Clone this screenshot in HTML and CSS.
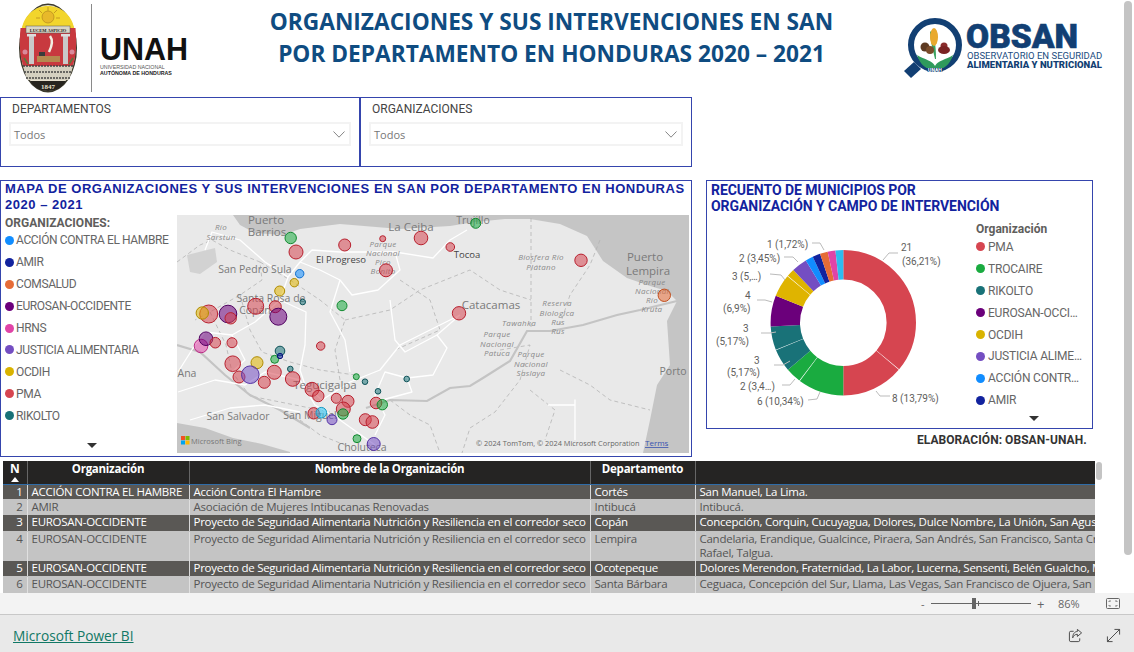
FILE: index.html
```html
<!DOCTYPE html>
<html lang="es">
<head>
<meta charset="utf-8">
<title>Organizaciones y sus intervenciones en SAN</title>
<link rel="stylesheet" href="styles.css">
</head>
<body>
<div class="report">
  <header class="header">
    <svg class="logo-unah" viewBox="0 0 200 97" aria-label="UNAH">
      <ellipse cx="48" cy="48" rx="29" ry="44.5" fill="#3c3a2c"/>
      <ellipse cx="48" cy="48" rx="27.5" ry="43" fill="#e8e2d0"/>
      <path d="M21.5 30 C24 14 36 6 48 6 C60 6 72 14 74.500 30 Z" fill="#f2d52c"/>
      <circle cx="48" cy="17" r="6" fill="#e8b92a" stroke="#b98f20" stroke-width=".8"/>
      <path d="M48 7v4M39 10l3 3M57 10l-3 3M36 18h4M56 18h4" stroke="#c79a20" stroke-width="1"/>
      <path d="M20.500 28 H75.500 C77 45 76 58 72 68 H24 C20 58 19 45 20.500 28Z" fill="#c8393f"/>
      <rect x="26" y="26" width="44" height="7" fill="#d9d5c5" stroke="#555" stroke-width=".5"/>
      <text x="48" y="32" class="seal-motto">LUCEM ASPICIO</text>
      <rect x="29" y="36" width="5" height="28" fill="#c9c9c9"/>
      <rect x="63" y="36" width="5" height="28" fill="#c9c9c9"/>
      <rect x="27" y="34" width="9" height="2.500" fill="#ddd"/>
      <rect x="61" y="34" width="9" height="2.500" fill="#ddd"/>
      <path d="M50 36 C53 40 52 46 49 52" stroke="#f2efe2" stroke-width="2.500" fill="none"/>
      <rect x="37" y="56" width="23" height="6" fill="#b5894f"/>
      <rect x="39" y="52" width="6" height="4" fill="#3b3b3b"/>
      <circle cx="25" cy="52" r="2.500" fill="#d98a9b"/>
      <circle cx="72" cy="52" r="2.500" fill="#d98a9b"/>
      <path d="M24 58l4 6M73 58l-4 6" stroke="#567a3c" stroke-width="1.500"/>
      <path d="M23 66 H73 L69 80 H27 Z" fill="#d4d0c0"/>
      <path d="M23 66H73M24 72H72M26 78H70" stroke="#444" stroke-width="1.500" stroke-dasharray="2 1"/>
      <path d="M30 81 H66 C62 88 55 91 48 91 C41 91 34 88 30 81Z" fill="#27251f"/>
      <text x="48" y="89" class="seal-year">1847</text>
      <rect x="91" y="4" width="1" height="88" fill="#8a8a8a"/>
      <text x="100" y="60" class="unah-big">UNAH</text>
      <text x="100" y="69" class="unah-small">UNIVERSIDAD NACIONAL</text>
      <text x="100" y="75" class="unah-small unah-strong">AUTÓNOMA DE HONDURAS</text>
    </svg>
    <h1 class="title">ORGANIZACIONES Y SUS INTERVENCIONES EN SAN<br>POR DEPARTAMENTO EN HONDURAS 2020 – 2021</h1>
    <svg class="logo-obsan" viewBox="900 0 210 97" aria-label="OBSAN">
      <path d="M914 62 L921 69 L911 78 L904 71 Z" fill="#123f73"/>
      <circle cx="935" cy="45" r="24" fill="#fff" stroke="#123f73" stroke-width="6"/>
      <path d="M917 55 C925 60 932 60 935 66 C938 60 946 60 953 55 C950 65 943 70 935 70 C927 70 920 65 917 55Z" fill="#2f9a5c"/>
      <path d="M935 59 C933 50 930 40 930 31 C934 34 936 44 936 59Z" fill="#3aa35f"/>
      <ellipse cx="934" cy="37" rx="4" ry="9" fill="#e9a92e"/>
      <circle cx="925" cy="47" r="4.500" fill="#5d3a22"/>
      <circle cx="930" cy="50" r="4" fill="#7a4c2a"/>
      <circle cx="944" cy="46" r="3.500" fill="#8a2c2c"/>
      <ellipse cx="944" cy="50" rx="6" ry="4" fill="#7a2323"/>
      <path d="M925 68 H945 L942 72 H928Z" fill="#123f73"/>
      <text x="935" y="71.500" class="obsan-mini">UNAH</text>
      <text x="966" y="48" class="obsan-big">OBSAN</text>
      <text x="967" y="59" class="obsan-line">OBSERVATORIO EN SEGURIDAD</text>
      <text x="967" y="68" class="obsan-line obsan-strong">ALIMENTARIA Y NUTRICIONAL</text>
    </svg>
  </header>

  <section class="slicers">
    <div class="slicer slicer-a">
      <div class="slicer-label">DEPARTAMENTOS</div>
      <div class="slicer-box"><span>Todos</span>
        <svg class="chev" viewBox="0 0 12 7"><path d="M.5.5 6 6.200 11.500.5" fill="none" stroke="#777" stroke-width=".9"/></svg>
      </div>
    </div>
    <div class="slicer slicer-b">
      <div class="slicer-label">ORGANIZACIONES</div>
      <div class="slicer-box"><span>Todos</span>
        <svg class="chev" viewBox="0 0 12 7"><path d="M.5.5 6 6.200 11.500.5" fill="none" stroke="#777" stroke-width=".9"/></svg>
      </div>
    </div>
  </section>

  <main class="visuals">
    <section class="map-card">
      <h2 class="map-title">MAPA DE ORGANIZACIONES Y SUS INTERVENCIONES EN SAN POR DEPARTAMENTO EN HONDURAS<br>2020 – 2021</h2>
      <div class="map-body">
        <div class="map-legend">
          <div class="legend-head">ORGANIZACIONES:</div>
          <ul class="legend-list">
            <li><i class="dot c-accion"></i>ACCIÓN CONTRA EL HAMBRE</li>
            <li><i class="dot c-amir"></i>AMIR</li>
            <li><i class="dot c-comsalud"></i>COMSALUD</li>
            <li><i class="dot c-eurosan"></i>EUROSAN-OCCIDENTE</li>
            <li><i class="dot c-hrns"></i>HRNS</li>
            <li><i class="dot c-justicia"></i>JUSTICIA ALIMENTARIA</li>
            <li><i class="dot c-ocdih"></i>OCDIH</li>
            <li><i class="dot c-pma"></i>PMA</li>
            <li><i class="dot c-rikolto"></i>RIKOLTO</li>
          </ul>
          <div class="more-arrow"></div>
        </div>
        <svg class="map" viewBox="177 215 512 238">
          <rect x="177" y="215" width="512" height="238" fill="#e9e9e9"/>
          <path class="sea" d="M233 215 L240 225 L255 233 L283 235 L300 229 L340 224 L400 229 L450 226 L475 222 L505 219 L530 219 L560 224 L587 236 L603 261 L627 278 L650 286 L667 291 L677 301 L667 321 L670 365 L657 385 L650 420 L643 453 L689 453 L689 215 Z"/>
          <path class="sea" d="M177 423 L205 428 L233 438 L262 444 L290 452 L290 453 L177 453 Z"/>
          <path class="lake" d="M187 255 L215 248 L217 262 L200 274 L190 272Z"/>
          <g class="dept">
            <path d="M177 262 L200 245 L212 240 L230 250 L260 262 L262 280 L240 295 L210 312 L195 320"/>
            <path d="M260 262 L290 280 L320 300 L345 320 L335 350 L340 380"/>
            <path d="M240 295 L250 330 L262 352 L290 362 L320 370 L355 375"/>
            <path d="M210 312 L226 345 L232 372 L250 396 L290 404 L330 412"/>
            <path d="M345 320 L390 310 L420 290 L470 270 L500 290 L531 300"/>
            <path d="M531 218 L531 332"/>
            <path d="M500 350 L530 345 L520 380 L495 412 L470 428 L462 453"/>
            <path d="M560 370 L590 385 L610 400 L650 410"/>
            <path d="M600 240 L590 265 L570 295 L560 325"/>
            <path d="M390 400 L410 415 L430 425 L440 453"/>
            <path d="M400 280 L430 300 L440 330 L395 350"/>
            <path d="M300 420 L320 435 L345 445"/>
            <path d="M530 390 L555 410 L545 440"/>
          </g>
          <path class="border" d="M177 345 L200 352 L225 375 L250 395 L280 410 L310 428 M366 408 L390 400 L427 401 L450 388 L470 386 L483 378 L510 361 L527 331 L550 331 L583 325 L617 315 L640 310 L677 301"/>
          <g class="road">
            <path d="M205 250 L212 232 L240 240 L265 262 L288 277 L300 262 L312 250 L340 252 L395 252 L433 258 L450 240 L467 230"/>
            <path d="M288 277 L280 300 L255 322 L232 335 L205 332 L195 345 L178 372"/>
            <path d="M300 262 L320 270 L340 280 L352 295 L378 290 L400 270 L395 252"/>
            <path d="M280 300 L306 312 L305 345 L300 370 L305 385 L322 400 L350 382 L380 370 L400 345 L460 315"/>
            <path d="M340 280 L330 312 L345 340 L350 372"/>
            <path d="M178 392 L215 380 L245 385 L265 372 L300 380 L315 405 L340 420 L375 445"/>
            <path d="M460 315 L437 335 L447 348 L433 375 L407 378 L385 372 L375 395 L385 415 L375 435"/>
            <path d="M190 420 L230 408 L265 405 L300 412"/>
            <path d="M407 378 L412 392 L382 400"/>
            <path d="M390 300 L395 340 L405 352 L437 335"/>
            <path d="M548 405 L575 405 L575 400 L575 440"/>
            <path d="M232 335 L245 360 L232 372"/>
          </g>
          <g class="lbl">
            <text class="city" x="266" y="224">Puerto</text>
            <text class="city" x="267" y="236">Barrios</text>
            <text class="tiny it" x="221" y="230">Río</text>
            <text class="tiny it" x="221" y="240">Sarstun</text>
            <text x="255" y="273">San Pedro Sula</text>
            <text class="dark small" x="341" y="263">El Progreso</text>
            <text x="271" y="302">Santa Rosa de</text>
            <text x="255" y="314">Copán</text>
            <text x="187" y="377">Ana</text>
            <text class="city" x="325" y="389">Tegucigalpa</text>
            <text x="238" y="420">San Salvador</text>
            <text x="310" y="419">San Miguel</text>
            <text x="362" y="451">Choluteca</text>
            <text class="city" x="411" y="231">La Ceiba</text>
            <text x="473" y="224">Trujillo</text>
            <text class="tiny it" x="383" y="247">Parque</text>
            <text class="tiny it" x="383" y="256">Nacional</text>
            <text class="tiny it" x="383" y="265">Pico</text>
            <text class="tiny it" x="383" y="274">Bonito</text>
            <text class="dark small" x="467" y="258">Tocoa</text>
            <text class="tiny it" x="541" y="260">Biosfera Río</text>
            <text class="tiny it" x="541" y="270">Plátano</text>
            <text class="city" x="645" y="261">Puerto</text>
            <text class="city" x="648" y="275">Lempira</text>
            <text class="tiny it" x="652" y="285">Parque</text>
            <text class="tiny it" x="652" y="294">Nacional</text>
            <text class="tiny it" x="652" y="303">Río</text>
            <text class="tiny it" x="652" y="312">Kruta</text>
            <text class="city" x="491" y="309">Catacamas</text>
            <text class="tiny it" x="557" y="306">Reserva</text>
            <text class="tiny it" x="557" y="316">Biologica</text>
            <text class="tiny it" x="558" y="325">Rus</text>
            <text class="tiny it" x="558" y="334">Rus</text>
            <text class="tiny it" x="519" y="326">Tawahka</text>
            <text class="tiny it" x="497" y="337">Parque</text>
            <text class="tiny it" x="497" y="347">Nacional</text>
            <text class="tiny it" x="497" y="356">Patuca</text>
            <text class="tiny it" x="531" y="357">Parque</text>
            <text class="tiny it" x="531" y="367">Nacional</text>
            <text class="tiny it" x="531" y="376">Saslaya</text>
            <text x="673" y="375">Porto</text>
          </g>
          <g class="pins">
            <circle class="p-trocaire" cx="290.700" cy="238" r="5.700"/>
            <circle class="p-pma" cx="296" cy="252" r="7"/>
            <circle class="p-pma" cx="344.700" cy="245" r="6"/>
            <circle class="p-accion" cx="299.700" cy="273.700" r="4.200"/>
            <circle class="p-ocdih" cx="294.300" cy="282.700" r="4.200"/>
            <circle class="p-ocdih" cx="279.700" cy="291" r="5"/>
            <circle class="p-rikolto" cx="302.700" cy="302" r="2.800"/>
            <circle class="p-trocaire" cx="342" cy="305.700" r="5"/>
            <circle class="p-pma" cx="255.700" cy="306.300" r="8"/>
            <circle class="p-pma" cx="275.300" cy="306.700" r="6"/>
            <circle class="p-eurosan" cx="278.300" cy="316.700" r="8.500"/>
            <circle class="p-pma" cx="208.700" cy="314" r="9"/>
            <circle class="p-ocdih" cx="202.300" cy="313" r="6.200"/>
            <circle class="p-eurosan" cx="228" cy="314" r="8.800"/>
            <circle class="p-pma" cx="230.700" cy="318.300" r="5.700"/>
            <circle class="p-hrns" cx="201" cy="346" r="6.800"/>
            <circle class="p-eurosan" cx="206" cy="338.700" r="6.800"/>
            <circle class="p-pma" cx="215.300" cy="342.700" r="5.300"/>
            <circle class="p-pma" cx="232" cy="342.700" r="5"/>
            <circle class="p-pma" cx="320.700" cy="346" r="4.200"/>
            <circle class="p-rikolto" cx="280" cy="351" r="4.800"/>
            <circle class="p-trocaire" cx="274.700" cy="359.300" r="4"/>
            <circle class="p-amir" cx="280" cy="356" r="2.700"/>
            <circle class="p-ocdih" cx="257" cy="362.700" r="6"/>
            <circle class="p-pma" cx="232.700" cy="363.700" r="7.800"/>
            <circle class="p-pma" cx="239" cy="377" r="6"/>
            <circle class="p-justicia" cx="250.300" cy="374.700" r="8.800"/>
            <circle class="p-pma" cx="274.300" cy="372.300" r="7"/>
            <circle class="p-rikolto" cx="290.300" cy="369" r="2.800"/>
            <circle class="p-pma" cx="264.300" cy="382.300" r="6"/>
            <circle class="p-pma" cx="292.700" cy="379" r="7.300"/>
            <circle class="p-pma" cx="312" cy="389.300" r="7"/>
            <circle class="p-pma" cx="318.300" cy="396" r="5.700"/>
            <circle class="p-pma" cx="336.300" cy="398.300" r="5"/>
            <circle class="p-pma" cx="348" cy="401.300" r="6"/>
            <circle class="p-pma" cx="343.300" cy="409" r="7"/>
            <circle class="p-trocaire" cx="343" cy="414" r="5.200"/>
            <circle class="p-pma" cx="313.700" cy="413.300" r="5.700"/>
            <circle class="p-cyan" cx="321.300" cy="412.700" r="5.300"/>
            <circle class="p-justicia" cx="332" cy="419.700" r="5"/>
            <circle class="p-trocaire" cx="475.700" cy="223.300" r="5"/>
            <circle class="p-pma" cx="421" cy="238" r="6.800"/>
            <circle class="p-pma" cx="382.700" cy="238.700" r="3"/>
            <circle class="p-pma" cx="450.300" cy="247" r="4.300"/>
            <circle class="p-pma" cx="386" cy="270.300" r="6.500"/>
            <circle class="p-pma" cx="581" cy="260.300" r="6.200"/>
            <circle class="p-pma" cx="459" cy="313.300" r="6.700"/>
            <circle class="p-comsalud" cx="664.300" cy="295.300" r="6.200"/>
            <circle class="p-trocaire" cx="356.300" cy="376.700" r="3"/>
            <circle class="p-rikolto" cx="365" cy="381.700" r="2.800"/>
            <circle class="p-rikolto" cx="406.700" cy="379" r="2.800"/>
            <circle class="p-rikolto" cx="378" cy="391.300" r="2.800"/>
            <circle class="p-pma" cx="376" cy="403" r="5.800"/>
            <circle class="p-trocaire" cx="382.300" cy="404.700" r="5.200"/>
            <circle class="p-pma" cx="365.300" cy="419.700" r="6"/>
            <circle class="p-pma" cx="372.300" cy="422" r="6.300"/>
            <circle class="p-trocaire" cx="357" cy="438.700" r="4"/>
            <circle class="p-justicia" cx="373.700" cy="444" r="6.500"/>
          </g>
          <g>
            <rect x="181" y="436" width="4" height="4" fill="#f25022"/>
            <rect x="185.500" y="436" width="4" height="4" fill="#7fba00"/>
            <rect x="181" y="440.500" width="4" height="4" fill="#00a4ef"/>
            <rect x="185.500" y="440.500" width="4" height="4" fill="#ffb900"/>
            <text class="bing" x="191" y="444">Microsoft Bing</text>
            <text class="attr" x="476" y="446">© 2024 TomTom, © 2024 Microsoft Corporation</text>
            <text class="terms" x="645" y="446">Terms</text>
          </g>
        </svg>
      </div>
    </section>

    <div class="right-col">
      <section class="donut-card">
        <h2 class="donut-title">RECUENTO DE MUNICIPIOS POR<br>ORGANIZACIÓN Y CAMPO DE INTERVENCIÓN</h2>
        <div class="donut-body">
          <svg class="donut" viewBox="706 216 264 212">
            <g class="ring" transform="rotate(-90 843.300 323.700)">
              <circle class="s-pma" pathLength="100" cx="843.300" cy="323.700" r="58" stroke-dasharray="36.060 100" stroke-dashoffset="0"/>
              <circle class="s-pma" pathLength="100" cx="843.300" cy="323.700" r="58" stroke-dasharray="13.790 100" stroke-dashoffset="-36.210"/>
              <circle class="s-trocaire" pathLength="100" cx="843.300" cy="323.700" r="58" stroke-dasharray="10.190 100" stroke-dashoffset="-50"/>
              <circle class="s-trocaire" pathLength="100" cx="843.300" cy="323.700" r="58" stroke-dasharray="3.450 100" stroke-dashoffset="-60.340"/>
              <circle class="s-rikolto" pathLength="100" cx="843.300" cy="323.700" r="58" stroke-dasharray="5.020 100" stroke-dashoffset="-63.790"/>
              <circle class="s-rikolto" pathLength="100" cx="843.300" cy="323.700" r="58" stroke-dasharray="5.170 100" stroke-dashoffset="-68.960"/>
              <circle class="s-eurosan" pathLength="100" cx="843.300" cy="323.700" r="58" stroke-dasharray="6.900 100" stroke-dashoffset="-74.130"/>
              <circle class="s-ocdih" pathLength="100" cx="843.300" cy="323.700" r="58" stroke-dasharray="5.020 100" stroke-dashoffset="-81.030"/>
              <circle class="s-ocdih" pathLength="100" cx="843.300" cy="323.700" r="58" stroke-dasharray="1.720 100" stroke-dashoffset="-86.200"/>
              <circle class="s-justicia" pathLength="100" cx="843.300" cy="323.700" r="58" stroke-dasharray="3.450 100" stroke-dashoffset="-87.920"/>
              <circle class="s-accion" pathLength="100" cx="843.300" cy="323.700" r="58" stroke-dasharray="1.720 100" stroke-dashoffset="-91.370"/>
              <circle class="s-amir" pathLength="100" cx="843.300" cy="323.700" r="58" stroke-dasharray="1.720 100" stroke-dashoffset="-93.090"/>
              <circle class="s-comsalud" pathLength="100" cx="843.300" cy="323.700" r="58" stroke-dasharray="1.720 100" stroke-dashoffset="-94.810"/>
              <circle class="s-hrns" pathLength="100" cx="843.300" cy="323.700" r="58" stroke-dasharray="1.720 100" stroke-dashoffset="-96.530"/>
              <circle class="s-cyan" pathLength="100" cx="843.300" cy="323.700" r="58" stroke-dasharray="1.750 100" stroke-dashoffset="-98.250"/>
            </g>
            <g class="leaders">
              <path d="M883 261 L889 254 L898 254"/>
              <path d="M876 392 L880 397 L890 397"/>
              <path d="M820 393 L817 400 L808 401"/>
              <path d="M795 380 L790 386 L782 386"/>
              <path d="M790 362 L783 366 L774 366"/>
              <path d="M776 333 L770 334 L761 334"/>
              <path d="M772 303 L765 301 L757 301"/>
              <path d="M785 281 L781 276 L770 275"/>
              <path d="M798 263 L793 258 L784 258"/>
              <path d="M824 251 L820 244 L812 244"/>
            </g>
            <g class="d-lbl">
              <text x="901" y="252">21</text>
              <text x="902" y="266">(36,21%)</text>
              <text x="892" y="403">8 (13,79%)</text>
              <text x="757" y="406">6 (10,34%)</text>
              <text x="740" y="391">2 (3,4…)</text>
              <text x="754" y="365">3</text>
              <text x="727" y="377">(5,17%)</text>
              <text x="743" y="333">3</text>
              <text x="716" y="346">(5,17%)</text>
              <text x="745" y="300">4</text>
              <text x="723" y="313">(6,9%)</text>
              <text x="732" y="281">3 (5,…)</text>
              <text x="739" y="263">2 (3,45%)</text>
              <text x="767" y="249">1 (1,72%)</text>
            </g>
          </svg>
          <div class="donut-legend">
            <div class="dl-head">Organización</div>
            <ul class="dl-list">
              <li><i class="dot c-pma"></i>PMA</li>
              <li><i class="dot c-trocaire"></i>TROCAIRE</li>
              <li><i class="dot c-rikolto"></i>RIKOLTO</li>
              <li><i class="dot c-eurosan"></i>EUROSAN-OCCI…</li>
              <li><i class="dot c-ocdih"></i>OCDIH</li>
              <li><i class="dot c-justicia"></i>JUSTICIA ALIME…</li>
              <li><i class="dot c-accion"></i>ACCIÓN CONTR…</li>
              <li><i class="dot c-amir"></i>AMIR</li>
            </ul>
            <div class="more-arrow more-arrow-d"></div>
          </div>
        </div>
      </section>
      <p class="credit">ELABORACIÓN: OBSAN-UNAH.</p>
    </div>
  </main>

  <div class="table-area">
    <div class="table-wrap">
      <table class="grid">
        <colgroup><col class="w-n"><col class="w-org"><col class="w-name"><col class="w-dep"><col class="w-mun"></colgroup>
        <thead>
          <tr><th class="th-n">N<span class="sort"></span></th><th>Organización</th><th>Nombre de la Organización</th><th>Departamento</th><th></th></tr>
        </thead>
        <tbody>
          <tr class="odd r1"><td class="num">1</td><td>ACCIÓN CONTRA EL HAMBRE</td><td>Acción Contra El Hambre</td><td>Cortés</td><td>San Manuel, La Lima.</td></tr>
          <tr class="even r2"><td class="num">2</td><td>AMIR</td><td>Asociación de Mujeres Intibucanas Renovadas</td><td>Intibucá</td><td>Intibucá.</td></tr>
          <tr class="odd r3"><td class="num">3</td><td>EUROSAN-OCCIDENTE</td><td>Proyecto de Seguridad Alimentaria Nutrición y Resiliencia en el corredor seco</td><td>Copán</td><td>Concepción, Corquin, Cucuyagua, Dolores, Dulce Nombre, La Unión, San Agustín, San Pedro.</td></tr>
          <tr class="even r4"><td class="num">4</td><td>EUROSAN-OCCIDENTE</td><td>Proyecto de Seguridad Alimentaria Nutrición y Resiliencia en el corredor seco</td><td>Lempira</td><td>Candelaria, Erandique, Gualcince, Piraera, San Andrés, San Francisco, Santa Cruz, San<br>Rafael, Talgua.</td></tr>
          <tr class="odd r5"><td class="num">5</td><td>EUROSAN-OCCIDENTE</td><td>Proyecto de Seguridad Alimentaria Nutrición y Resiliencia en el corredor seco</td><td>Ocotepeque</td><td>Dolores Merendon, Fraternidad, La Labor, Lucerna, Sensenti, Belén Gualcho, Mercedes.</td></tr>
          <tr class="even r6"><td class="num">6</td><td>EUROSAN-OCCIDENTE</td><td>Proyecto de Seguridad Alimentaria Nutrición y Resiliencia en el corredor seco</td><td>Santa Bárbara</td><td>Ceguaca, Concepción del Sur, Llama, Las Vegas, San Francisco de Ojuera, San Pedro.</td></tr>
        </tbody>
      </table>
    </div>
    <div class="table-thumb"></div>
  </div>
</div>

<div class="status">
  <span class="z-minus">-</span>
  <span class="z-slider"><i class="z-tick"></i><i class="z-thumb"></i></span>
  <span class="z-plus">+</span>
  <span class="z-pct">86%</span>
  <svg class="z-fit" viewBox="0 0 14 11"><rect x=".5" y=".5" width="13" height="10" rx="1" fill="none" stroke="#666"/><path d="M3 4V3h2M11 4V3H9M3 7v1h2M11 7v1H9" fill="none" stroke="#666" stroke-width=".8"/></svg>
</div>
<footer class="footer">
  <a class="pbi-link" href="#">Microsoft Power BI</a>
  <div class="foot-icons">
    <svg viewBox="0 0 16 16"><path d="M6 3.500H3a1.500 1.500 0 0 0-1.500 1.500v8A1.500 1.500 0 0 0 3 14.500h8a1.500 1.500 0 0 0 1.500-1.500v-2" fill="none" stroke="#444"/><path d="M10 1.500l4.500 3.700L10 9V6.700C7.500 6.700 6 8 5 10.500 5 6.500 7 3.800 10 3.700Z" fill="none" stroke="#444"/></svg>
    <svg viewBox="0 0 16 16"><path d="M1.500 14.500L14.500 1.500M9 1.500h5.500V7M1.500 9v5.500H7" fill="none" stroke="#444"/></svg>
  </div>
</footer>
<div class="page-scroll"></div>
</body>
</html>
```
FILE: styles.css
```css
* { box-sizing: border-box; }
html, body { margin: 0; padding: 0; height: 100%; overflow: hidden; background: #fff; }
body { width: 1134px; height: 652px; position: relative; font-family: "Roboto", "Liberation Sans", sans-serif; color: #605e5c; }
ul { list-style: none; margin: 0; padding: 0; }
i { display: block; }

.report { height: 593px; overflow: hidden; background: #fff; }

/* header */
.header { display: grid; grid-template-columns: 205px 693px 1fr; height: 97px; }
.logo-unah { width: 200px; height: 97px; display: block; }
.logo-obsan { width: 210px; height: 97px; display: block; margin-left: 2px; }
.title { margin: 6px 0 0; font: 700 22.700px/32px "Open Sans", sans-serif; color: #0f4c81; text-align: center; white-space: nowrap; }
.seal-motto { font: 700 4.500px "Liberation Serif", serif; text-anchor: middle; fill: #222; }
.seal-year { font: 700 7px "Liberation Serif", serif; text-anchor: middle; fill: #e8e2d0; }
.unah-big { font: 700 30.500px "Liberation Sans", sans-serif; fill: #111; }
.unah-small { font: 400 5.300px "Liberation Sans", sans-serif; fill: #555; }
.unah-strong { font-weight: 700; fill: #222; }
.obsan-big { font: 900 33.500px "Roboto", sans-serif; fill: #123f73; stroke: #123f73; stroke-width: .6px; }
.obsan-line { font: 400 9.500px "Roboto", sans-serif; fill: #1b4c80; }
.obsan-strong { font-weight: 900; fill: #123f73; }
.obsan-mini { font: 700 5px "Roboto", sans-serif; fill: #fff; text-anchor: middle; }

/* slicers */
.slicers { display: flex; height: 70px; width: 692px; }
.slicer { border: 1.500px solid #3545ad; padding: 3px 8px 0 8px; background: #fff; }
.slicer-a { width: 360px; }
.slicer-b { width: 332px; border-left-width: 1px; }
.slicer-label { font-size: 12px; line-height: 17px; color: #444; padding-left: 3px; }
.slicer-box { display: flex; align-items: center; justify-content: space-between; height: 24px; margin-top: 4px; border: 2px solid #f3f3f3; padding: 0 4px 0 3px; font: 400 11px "Open Sans", sans-serif; color: #777; }
.chev { width: 12px; height: 7px; }

/* visuals */
.visuals { display: flex; gap: 14px; height: 294px; padding-top: 13px; }
.map-card { width: 692px; height: 276.500px; border: 1.500px solid #3545ad; padding: 0 3px 0 4px; display: flex; flex-direction: column; }
.map-title { margin: 0; font: 700 13px/16px "Liberation Sans", sans-serif; letter-spacing: .52px; color: #12239e; height: 32px; white-space: nowrap; }
.map-body { display: flex; height: 238px; margin-top: 1.500px; }
.map-legend { width: 171.500px; flex: none; position: relative; }
.legend-head { font: 700 12px/16px "Roboto", sans-serif; color: #605e5c; }
.legend-list { margin-top: -1px; }
.legend-list li { display: flex; align-items: center; gap: 2px; height: 21.900px; font-size: 12px; letter-spacing: -.38px; color: #666; white-space: nowrap; }
.dot { width: 9px; height: 9px; border-radius: 50%; flex: none; }
.more-arrow { position: absolute; left: 82px; bottom: 5px; width: 0; height: 0; border-left: 5px solid transparent; border-right: 5px solid transparent; border-top: 5px solid #333; }
.map { width: 512px; height: 238px; display: block; flex: none; }

.c-accion { background: #118dff; } .c-amir { background: #12239e; } .c-comsalud { background: #e66c37; }
.c-eurosan { background: #6b007b; } .c-hrns { background: #e044a7; } .c-justicia { background: #744ec2; }
.c-ocdih { background: #d9b300; } .c-pma { background: #d64550; } .c-rikolto { background: #197278; }
.c-trocaire { background: #1aab40; }

.sea { fill: #c5c5c5; }
.lake { fill: #d2d2d2; }
.dept path { fill: none; stroke: #b4b4b4; stroke-width: .8; stroke-dasharray: 4 3; }
.border { fill: none; stroke: #c4c4c4; stroke-width: 2.200; }
.road path { fill: none; stroke: #fff; stroke-width: 1.300; stroke-linejoin: round; }
.lbl text { font: 400 10.500px "Open Sans", sans-serif; fill: #7a7a7a; text-anchor: middle; }
.lbl .city { font-size: 11.500px; }
.lbl .small { font-size: 9.500px; }
.lbl .dark { fill: #444; }
.lbl .tiny { font-size: 8px; fill: #8a8a8a; letter-spacing: .3px; }
.lbl .it { font-style: italic; }
.bing { font: 400 7.500px "Open Sans", sans-serif; fill: #777; }
.attr { font: 400 7.350px "Open Sans", sans-serif; fill: #666; }
.terms { font: 400 8px "Open Sans", sans-serif; fill: #3a53b0; text-decoration: underline; }

.pins circle { stroke-width: 1; fill-opacity: .55; }
.p-pma { fill: #d64550; stroke: #b8202e; }
.p-trocaire { fill: #1aab40; stroke: #128a30; }
.p-eurosan { fill: #6b007b; stroke: #4f0060; }
.p-justicia { fill: #744ec2; stroke: #5533a5; }
.p-ocdih { fill: #e0b400; stroke: #b08c00; }
.p-rikolto { fill: #197278; stroke: #0e5258; }
.p-accion { fill: #118dff; stroke: #0b6ed0; }
.p-cyan { fill: #1fc0f0; stroke: #119ac5; }
.p-amir { fill: #12239e; stroke: #0a167a; }
.p-hrns { fill: #e044a7; stroke: #bb2d86; }
.p-comsalud { fill: #e66c37; stroke: #c04f1e; }

/* donut */
.right-col { width: 387px; }
.donut-card { height: 249px; border: 1.500px solid #3545ad; display: flex; flex-direction: column; padding: 1px 0 0 4px; }
.donut-title { margin: 0; font: 700 14px/16px "Roboto", sans-serif; letter-spacing: -.05px; color: #12239e; white-space: nowrap; height: 33px; }
.donut-body { display: flex; }
.donut { width: 264px; height: 212px; display: block; margin-left: -5px; flex: none; }
.ring circle { fill: none; stroke-width: 29.400; }
.s-pma { stroke: #d64550; } .s-trocaire { stroke: #1aab40; } .s-rikolto { stroke: #197278; } .s-eurosan { stroke: #6b007b; }
.s-ocdih { stroke: #dfb400; } .s-justicia { stroke: #744ec2; } .s-accion { stroke: #118dff; } .s-amir { stroke: #12239e; }
.s-comsalud { stroke: #e66c37; } .s-hrns { stroke: #e044a7; } .s-cyan { stroke: #2ebcef; }
.leaders path { fill: none; stroke: #bbb; stroke-width: 1; }
.d-lbl text { font: 400 10px "Roboto", sans-serif; fill: #605e5c; }
.donut-legend { position: relative; width: 118px; margin-left: 6px; padding-top: 6px; white-space: nowrap; }
.dl-head { font: 700 12px/16px "Roboto", sans-serif; color: #605e5c; }
.dl-list { margin-top: -1px; }
.dl-list li { display: flex; align-items: center; gap: 3px; height: 21.900px; font-size: 12px; letter-spacing: -.2px; color: #666; }
.more-arrow-d { left: 53px; top: 201px; bottom: auto; }
.credit { margin: 4px 0 0; padding-left: 211px; font: 700 12px/14px "Roboto", sans-serif; letter-spacing: .05px; color: #333; white-space: nowrap; }

/* table */
.table-area { display: flex; gap: 1px; margin-left: 3px; height: 132px; }
.table-wrap { width: 1092px; height: 132px; overflow: hidden; flex: none; }
.grid { border-collapse: collapse; table-layout: fixed; width: 1340px; font: 400 11.500px/14px "Open Sans", sans-serif; letter-spacing: -.26px; }
.w-n { width: 24px; } .w-org { width: 162px; } .w-name { width: 401px; } .w-dep { width: 105px; } .w-mun { width: 648px; }
.grid th { background: #252423; color: #fff; font-weight: 700; height: 23px; padding: 0 4px 7px; text-align: center; border-right: 1px solid #666; border-bottom: 1px solid #2f6ca8; white-space: nowrap; overflow: hidden; }
.th-n { position: relative; font-size: 12px; }
.sort { position: absolute; left: 8px; top: 16px; width: 0; height: 0; border-left: 4px solid transparent; border-right: 4px solid transparent; border-bottom: 5px solid #fff; }
.grid td { padding: 0 4px; white-space: nowrap; overflow: hidden; vertical-align: top; border-right: 1px solid #d8d8d8; }
.grid .num { text-align: right; }
.odd td { background: #5a5855; color: #fff; }
.even td { background: #c4c4c4; color: #555; border-right-color: #e0e0e0; }
.r1 td { height: 15px; border-bottom: 1px solid #c4c4c4; }
.r2 td { height: 16px; }
.r3 td { height: 16px; border-bottom: 1px solid #c4c4c4; }
.r4 td { height: 30px; }
.r5 td { height: 15px; border-bottom: 1px solid #c4c4c4; }
.r6 td { height: 17px; }
.table-thumb { width: 6px; height: 18px; margin-top: 1px; border-radius: 3px; background: #c4c4c4; flex: none; }

/* bars */
.status { height: 22px; background: #f3f3f3; border-bottom: 1px solid #c8c8c8; display: flex; align-items: center; font: 400 11px "Open Sans", sans-serif; color: #666; padding-left: 921px; }
.z-minus { width: 10px; }
.z-slider { position: relative; width: 100px; height: 1px; background: #666; }
.z-tick { position: absolute; left: 47px; top: -2px; width: 1px; height: 5px; background: #666; }
.z-thumb { position: absolute; left: 41px; top: -5px; width: 4px; height: 11px; background: #666; }
.z-plus { width: 17px; margin-left: 6px; font-size: 13px; }
.z-pct { width: 48px; margin-left: 4px; }
.z-fit { width: 14px; height: 11px; }
.footer { height: 37px; background: #e9e9e9; display: flex; align-items: center; justify-content: space-between; padding: 3px 13px 0; }
.pbi-link { font: 400 13.700px "Open Sans", sans-serif; color: #117865; text-decoration: underline; }
.foot-icons { display: flex; gap: 23px; }
.foot-icons svg { width: 15px; height: 15px; display: block; }
.page-scroll { position: absolute; left: 1124px; top: 1px; width: 8px; height: 554px; border-radius: 4px; background: #c4c4c4; }
```
